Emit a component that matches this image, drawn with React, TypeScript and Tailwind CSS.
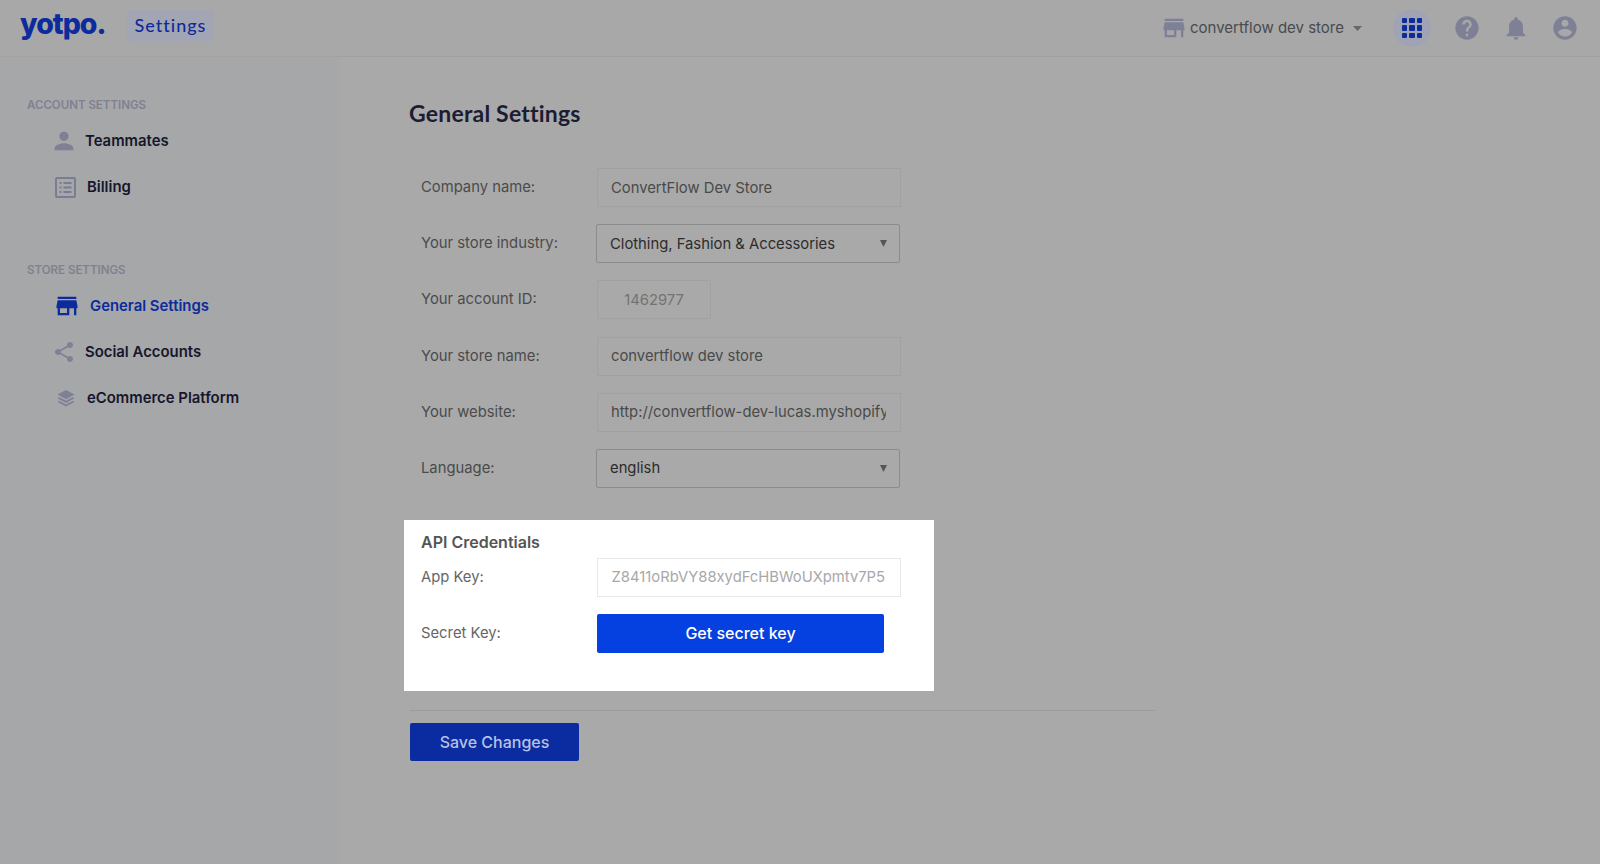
import React from "react";

const P = ({ d, className }: { d: string; className: string }) => (
  <svg viewBox="0 0 24 24" className={className} fill="currentColor" aria-hidden="true">
    <path d={d} />
  </svg>
);

const STORE = "M20 4H4v2h16V4zm1 10v-2l-1-5H4l-1 5v2h1v6h10v-6h4v6h2v-6h1zm-9 4H6v-4h6v4z";
const HELP =
  "M12 2C6.48 2 2 6.48 2 12s4.48 10 10 10 10-4.48 10-10S17.52 2 12 2zm1 17h-2v-2h2v2zm2.07-7.75l-.9.92C13.45 12.9 13 13.5 13 15h-2v-.5c0-1.1.45-2.1 1.17-2.83l1.24-1.26c.37-.36.59-.86.59-1.41 0-1.1-.9-2-2-2s-2 .9-2 2H8c0-2.21 1.79-4 4-4s4 1.79 4 4c0 .88-.36 1.68-.93 2.25z";
const BELL =
  "M12 22c1.1 0 2-.9 2-2h-4c0 1.1.89 2 2 2zm6-6v-5c0-3.07-1.64-5.64-4.5-6.32V4c0-.83-.67-1.5-1.5-1.5s-1.5.67-1.5 1.5v.68C7.63 5.36 6 7.92 6 11v5l-2 2v1h16v-1l-2-2z";
const USER =
  "M12 2C6.48 2 2 6.48 2 12s4.48 10 10 10 10-4.48 10-10S17.52 2 12 2zm0 3c1.66 0 3 1.34 3 3s-1.34 3-3 3-3-1.34-3-3 1.34-3 3-3zm0 14.2c-2.5 0-4.71-1.28-6-3.22.03-1.99 4-3.08 6-3.08 1.99 0 5.97 1.09 6 3.08-1.29 1.94-3.5 3.22-6 3.22z";
const PERSON =
  "M12 12c2.21 0 4-1.79 4-4s-1.79-4-4-4-4 1.79-4 4 1.79 4 4 4zm0 2c-2.67 0-8 1.34-8 4v2h16v-2c0-2.66-5.33-4-8-4z";
const SHARE =
  "M18 16.08c-.76 0-1.44.3-1.96.77L8.91 12.7c.05-.23.09-.46.09-.7s-.04-.47-.09-.7l7.05-4.11c.54.5 1.25.81 2.04.81 1.66 0 3-1.34 3-3s-1.34-3-3-3-3 1.34-3 3c0 .24.04.47.09.7L8.04 9.81C7.5 9.31 6.79 9 6 9c-1.66 0-3 1.34-3 3s1.34 3 3 3c.79 0 1.5-.31 2.04-.81l7.12 4.16c-.05.21-.08.43-.08.65 0 1.61 1.31 2.92 2.92 2.92 1.61 0 2.92-1.31 2.92-2.92s-1.31-2.92-2.92-2.92z";

const Billing = () => (
  <svg viewBox="0 0 21 21" className="w-[21px] h-[21px] text-[#7a7c92]" fill="none" stroke="currentColor" aria-hidden="true">
    <rect x="1" y="1" width="19" height="19" rx="1" strokeWidth="2" />
    <path d="M8.5 6h8M8.5 10.5h8M8.5 15h8M4.5 6h2M4.5 10.5h2M4.5 15h2" strokeWidth="1.8" />
  </svg>
);

const Layers = () => (
  <svg viewBox="0 0 18 17" className="w-[18px] h-[17px] text-[#7e8096]" fill="currentColor" aria-hidden="true">
    <path d="M9 0l8.5 4.6L9 9.2.5 4.6z" />
    <path d="M2.4 7.2L9 10.8l6.6-3.6 1.9 1.1L9 12.9.5 8.3z" />
    <path d="M2.4 10.9L9 14.5l6.6-3.6 1.9 1.1L9 16.6.5 12z" />
  </svg>
);

const Caret = ({ className }: { className: string }) => (
  <svg viewBox="0 0 10 6" className={className} fill="currentColor" preserveAspectRatio="none" aria-hidden="true">
    <path d="M0 0h10L5 6z" />
  </svg>
);

const SectionTitle = ({ children }: { children: React.ReactNode }) => (
  <div className="h-4 leading-4 text-[11.5px] font-semibold text-[#7f8190]">{children}</div>
);

const NavItem = ({
  icon,
  label,
  textClass,
  iconClass,
}: {
  icon: React.ReactNode;
  label: string;
  textClass: string;
  iconClass: string;
}) => (
  <div className="h-[46px] flex items-center">
    <div className={iconClass}>{icon}</div>
    <span className={textClass}>{label}</span>
  </div>
);

const labelClass = "w-[176px] shrink-0 text-[14.8px] leading-[22px] -mt-[1px] text-[#4b4b4b]";
const inputClass =
  "h-[39px] border border-[#a1a1a1] bg-[#a9a9a9] pl-[13px] pr-[14px] text-[14.8px] text-[#4a4a4a] outline-none";

const InputRow = ({ label, value }: { label: string; value: string }) => (
  <div className="h-[39px] flex items-center">
    <label className={labelClass}>{label}</label>
    <input readOnly value={value} className={`${inputClass} w-[304px]`} />
  </div>
);

const SelectRow = ({ label, value }: { label: string; value: string }) => (
  <div className="h-[39px] flex items-center">
    <label className={labelClass}>{label}</label>
    <div className="-ml-px h-[39px] w-[304px] flex items-center justify-between border border-[#8c8c8c] rounded-[2px] bg-[#a9a9a9] pl-[13px] pr-[12px] text-[14.8px] text-[#2c2c2c]">
      <span>{value}</span>
      <Caret className="w-[7px] h-[7px] text-[#555555]" />
    </div>
  </div>
);

export default function App() {
  return (
    <div className="h-[864px] w-full overflow-hidden bg-[#a9a9a9] flex flex-col font-['Inter',sans-serif]">
      <header className="h-[57px] shrink-0 bg-[#a8a8a8] border-b border-[#a1a1a1] flex items-center pl-[20px] pr-[21px]">
        <span className="w-[88px] text-[28.5px] leading-none font-extrabold tracking-[-1px] text-[#0d2b9b] font-['Inter',sans-serif] -mt-[7px]">
          yotpo.
        </span>
        <span className="ml-[19px] -mt-[6px] h-[31px] w-[87px] flex items-center justify-center rounded-[3px] bg-[#a2a5b3] text-[18px] font-medium tracking-[1px] text-[#0d2b9b] font-['Lato','Inter',sans-serif]">
          Settings
        </span>
        <div className="ml-auto flex items-center">
          <P d={STORE} className="w-[28px] h-[28px] text-[#7e8096]" />
          <span className="ml-[2px] text-[15px] text-[#4a4a4f]">convertflow dev store</span>
          <Caret className="ml-[9px] w-[9px] h-[5px] text-[#66676f]" />
          <div className="ml-[31px] w-[38px] h-[38px] rounded-full bg-[#a0a3b4] grid grid-cols-3 gap-[2px] p-[9px]">
            {Array.from({ length: 9 }).map((_, i) => (
              <span key={i} className="bg-[#0d2b9b] rounded-[1px]" />
            ))}
          </div>
          <P d={HELP} className="ml-[22px] w-[28px] h-[28px] text-[#7e8096]" />
          <P d={BELL} className="ml-[21px] w-[28px] h-[28px] text-[#7e8096]" />
          <P d={USER} className="ml-[21px] w-[28px] h-[28px] text-[#7e8096]" />
        </div>
      </header>

      <div className="flex-1 flex">
        <aside className="w-[340px] shrink-0 bg-[#a6a7a9] pl-[27px] pt-[40px]">
          <SectionTitle>ACCOUNT SETTINGS</SectionTitle>
          <div className="mt-[5px]">
            <NavItem
              icon={<P d={PERSON} className="w-[28px] h-[28px] text-[#7e8096]" />}
              iconClass="ml-[23px] w-[28px]"
              label="Teammates"
              textClass="ml-[7px] text-[14.9px] font-semibold text-[#16162b]"
            />
            <NavItem
              icon={<Billing />}
              iconClass="ml-[28px] w-[21px]"
              label="Billing"
              textClass="ml-[11px] text-[14.9px] font-semibold text-[#16162b]"
            />
          </div>
          <div className="mt-[52px]">
            <SectionTitle>STORE SETTINGS</SectionTitle>
          </div>
          <div className="mt-[5px]">
            <NavItem
              icon={<P d={STORE} className="w-[28px] h-[28px] text-[#0d2b9b]" />}
              iconClass="ml-[26px] w-[28px]"
              label="General Settings"
              textClass="ml-[9px] text-[14.9px] font-semibold text-[#0d2b9b]"
            />
            <NavItem
              icon={<P d={SHARE} className="w-[24px] h-[24px] text-[#7e8096]" />}
              iconClass="ml-[25px] w-[24px]"
              label="Social Accounts"
              textClass="ml-[9px] text-[14.9px] font-semibold text-[#16162b]"
            />
            <NavItem
              icon={<Layers />}
              iconClass="ml-[30px] w-[18px]"
              label="eCommerce Platform"
              textClass="ml-[12px] text-[14.9px] font-semibold text-[#16162b]"
            />
          </div>
        </aside>

        <main className="flex-1 pl-[69px] pt-[40px]">
          <h1 className="h-8 leading-8 text-[23px] font-bold tracking-[0.2px] text-[#1c1c33] font-['Lato','Inter',sans-serif]">
            General Settings
          </h1>
          <div className="mt-[39px] pl-[12px] flex flex-col gap-[17.2px]">
            <InputRow label="Company name:" value="ConvertFlow Dev Store" />
            <SelectRow label="Your store industry:" value="Clothing, Fashion & Accessories" />
            <div className="h-[39px] flex items-center">
              <label className={labelClass}>Your account ID:</label>
              <input
                readOnly
                value="1462977"
                className="h-[39px] w-[114px] border border-[#a1a1a1] bg-[#a9a9a9] text-center text-[14.8px] text-[#737373] outline-none"
              />
            </div>
            <InputRow label="Your store name:" value="convertflow dev store" />
            <InputRow label="Your website:" value="http://convertflow-dev-lucas.myshopify.com" />
            <SelectRow label="Language:" value="english" />
          </div>

          <section className="-ml-[5px] mt-[32px] w-[530px] bg-white pl-[17px] pt-[10px] pb-[38px]">
            <h2 className="h-6 leading-6 text-[16px] font-semibold text-[#555555]">API Credentials</h2>
            <div className="mt-[4px] h-[39px] flex items-center">
              <label className="w-[176px] shrink-0 text-[14.8px] leading-[22px] -mt-[1px] text-[#666666]">
                App Key:
              </label>
              <input
                readOnly
                value="Z8411oRbVY88xydFcHBWoUXpmtv7P5"
                className="h-[39px] w-[304px] border border-[#e8e8e8] bg-white pl-[13.5px] pr-[10px] text-[14.8px] text-[#a8a8a8] outline-none"
              />
            </div>
            <div className="mt-[17px] h-[39px] flex items-center">
              <label className="w-[176px] shrink-0 text-[14.8px] leading-[22px] -mt-[1px] text-[#666666]">
                Secret Key:
              </label>
              <button className="h-[39px] w-[287px] rounded-[2px] bg-[#0540e0] text-white text-[16px] font-medium">
                Get secret key
              </button>
            </div>
          </section>

          <div className="ml-px mt-[19px] w-[745px] border-t border-[#9c9c9c]" />
          <button className="ml-px mt-[12px] h-[38px] w-[169px] rounded-[2px] bg-[#0a2ca0] text-[#b7c1e2] text-[16px] font-medium">
            Save Changes
          </button>
        </main>
      </div>
    </div>
  );
}
